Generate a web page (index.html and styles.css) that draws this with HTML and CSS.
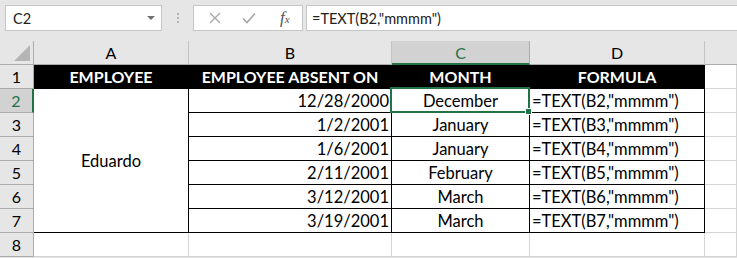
FILE: index.html
```html
<!DOCTYPE html>
<html lang="en">
<head>
    <meta charset="UTF-8">
    <title>TEXT month</title>
    <link rel="stylesheet" href="styles.css">
</head>
<body>
    <!-- formula bar -->
    <div class="toolbar">
        <div class="name-box">
            <span>C2</span>
            <svg class="arrow" width="8" height="5" viewBox="0 0 8 5"><path d="M0 0h8L4 4z" fill="#6f6f6f"/></svg>
        </div>
        <div class="dots"><i></i><i></i><i></i></div>
        <div class="fx-buttons">
            <svg width="12" height="12" viewBox="0 0 12 12"><path d="M1 1L11 11M11 1L1 11" stroke="#a6a6a6" stroke-width="1.3"/></svg>
            <svg width="14" height="12" viewBox="0 0 14 12"><path d="M1 6.5L5 10.5L13 1.5" stroke="#a6a6a6" stroke-width="1.6" fill="none"/></svg>
            <span class="fx">f<small>x</small></span>
        </div>
        <div class="formula">=TEXT(B2,"mmmm")</div>
    </div>

    <!-- sheet -->
    <div class="sheet">
        <div class="hd corner"><span class="tri"></span></div>
        <div class="hd col">A</div>
        <div class="hd col">B</div>
        <div class="hd col sel">C</div>
        <div class="hd col">D</div>
        <div class="hd col last"></div>

        <div class="hd row">1</div>
        <div class="cell title">EMPLOYEE</div>
        <div class="cell title">EMPLOYEE ABSENT ON</div>
        <div class="cell title">MONTH</div>
        <div class="cell title">FORMULA</div>
        <div class="cell"></div>

        <div class="hd row sel">2</div>
        <div class="cell merged">Eduardo</div>
        <div class="cell tb num">12/28/2000</div>
        <div class="cell tb mid active">December<span class="handle"></span></div>
        <div class="cell tb end left">=TEXT(B2,"mmmm")</div>
        <div class="cell"></div>

        <div class="hd row">3</div>
        <div class="cell tb num">1/2/2001</div>
        <div class="cell tb mid">January</div>
        <div class="cell tb end left">=TEXT(B3,"mmmm")</div>
        <div class="cell"></div>

        <div class="hd row">4</div>
        <div class="cell tb num">1/6/2001</div>
        <div class="cell tb mid">January</div>
        <div class="cell tb end left">=TEXT(B4,"mmmm")</div>
        <div class="cell"></div>

        <div class="hd row">5</div>
        <div class="cell tb num">2/11/2001</div>
        <div class="cell tb mid">February</div>
        <div class="cell tb end left">=TEXT(B5,"mmmm")</div>
        <div class="cell"></div>

        <div class="hd row">6</div>
        <div class="cell tb num">3/12/2001</div>
        <div class="cell tb mid">March</div>
        <div class="cell tb end left">=TEXT(B6,"mmmm")</div>
        <div class="cell"></div>

        <div class="hd row">7</div>
        <div class="cell tb num">3/19/2001</div>
        <div class="cell tb mid">March</div>
        <div class="cell tb end left">=TEXT(B7,"mmmm")</div>
        <div class="cell"></div>

        <div class="hd row">8</div>
        <div class="cell"></div>
        <div class="cell"></div>
        <div class="cell"></div>
        <div class="cell"></div>
        <div class="cell"></div>
    </div>
</body>
</html>
```

FILE: styles.css
```css
body {
    margin: 0;
    background: #e6e6e6;
    font-family: Lato, "Liberation Sans", sans-serif;
    overflow: hidden;
}

/* formula bar */
.toolbar {
    display: flex;
    align-items: stretch;
    height: 26px;
    padding: 5px 0 10px 5px;
}

.name-box {
    width: 157px;
    box-sizing: border-box;
    border: 1px solid #c6c6c6;
    background: #fff;
    display: flex;
    align-items: center;
    justify-content: space-between;
    padding: 0 6px 0 7px;
    font-size: 14.5px;
    color: #222;
}

.arrow {
    margin-top: 1px;
}

.dots {
    width: 31px;
    display: flex;
    flex-direction: column;
    align-items: center;
    justify-content: center;
    gap: 2px;
}

.dots i {
    width: 2px;
    height: 2px;
    background: #b3b3b3;
}

.fx-buttons {
    width: 110px;
    box-sizing: border-box;
    border: 1px solid #c6c6c6;
    background: #fff;
    display: flex;
    align-items: center;
    padding: 0 0 0 15px;
    gap: 21px;
}

.fx {
    font-family: "Liberation Serif", serif;
    font-style: italic;
    font-size: 17px;
    color: #555;
    margin-left: 3px;
}

.fx small {
    font-size: 11px;
}

.formula {
    flex: 1;
    margin-left: 3px;
    border: 1px solid #c6c6c6;
    border-right: none;
    background: #fff;
    display: flex;
    align-items: center;
    padding-left: 5px;
    font-size: 14.5px;
    color: #222;
}

/* sheet grid */
.sheet {
    display: grid;
    grid-template-columns: 34px 155px 203px 138px 175px 1fr;
    grid-auto-rows: 24px;
    background: #fff;
}

.sheet > div {
    box-sizing: border-box;
    display: flex;
    align-items: center;
    justify-content: center;
    font-size: 16.5px;
    color: #000;
}

.hd {
    background: #e6e6e6;
    border-right: 1px solid #ababab;
    border-bottom: 1px solid #ababab;
    color: #222;
}

.sheet > .hd {
    font-size: 16px;
}

.hd.col {
    border-right-color: #c4c4c4;
}

.hd.col.last {
    border-right: none;
}

.corner {
    position: relative;
}

.tri {
    position: absolute;
    right: 3px;
    bottom: 3px;
    width: 0;
    height: 0;
    border-left: 16px solid transparent;
    border-bottom: 16px solid #b5b5b5;
}

.hd.sel {
    background: #d2d2d2;
    color: #217346;
}

.hd.col.sel {
    border-bottom: 2px solid #217346;
    border-right-color: #ababab;
}

.hd.row.sel {
    border-right: 2px solid #217346;
}

.cell {
    border-right: 1px solid #d4d4d4;
    border-bottom: 1px solid #d4d4d4;
}

.sheet > .cell.title {
    background: #000;
    color: #fff;
    font-weight: bold;
    font-size: 16px;
    border-color: #000;
}

.cell.merged {
    grid-row: span 6;
    border-right: 1px solid #000;
    border-bottom: 1px solid #000;
}

.cell.tb {
    border-bottom-color: #000;
    border-right-color: #000;
}

.cell.num {
    justify-content: flex-end;
    padding-right: 2px;
}

.cell.left {
    justify-content: flex-start;
    padding-left: 2px;
}

.cell.active {
    position: relative;
}

.cell.active::before {
    content: "";
    position: absolute;
    left: -2px;
    top: -2px;
    right: -1px;
    bottom: -1px;
    border: 2px solid #217346;
}

.handle {
    position: absolute;
    right: -3px;
    bottom: -3px;
    width: 5px;
    height: 5px;
    background: #217346;
    border: 1px solid #fff;
    z-index: 2;
}
```
